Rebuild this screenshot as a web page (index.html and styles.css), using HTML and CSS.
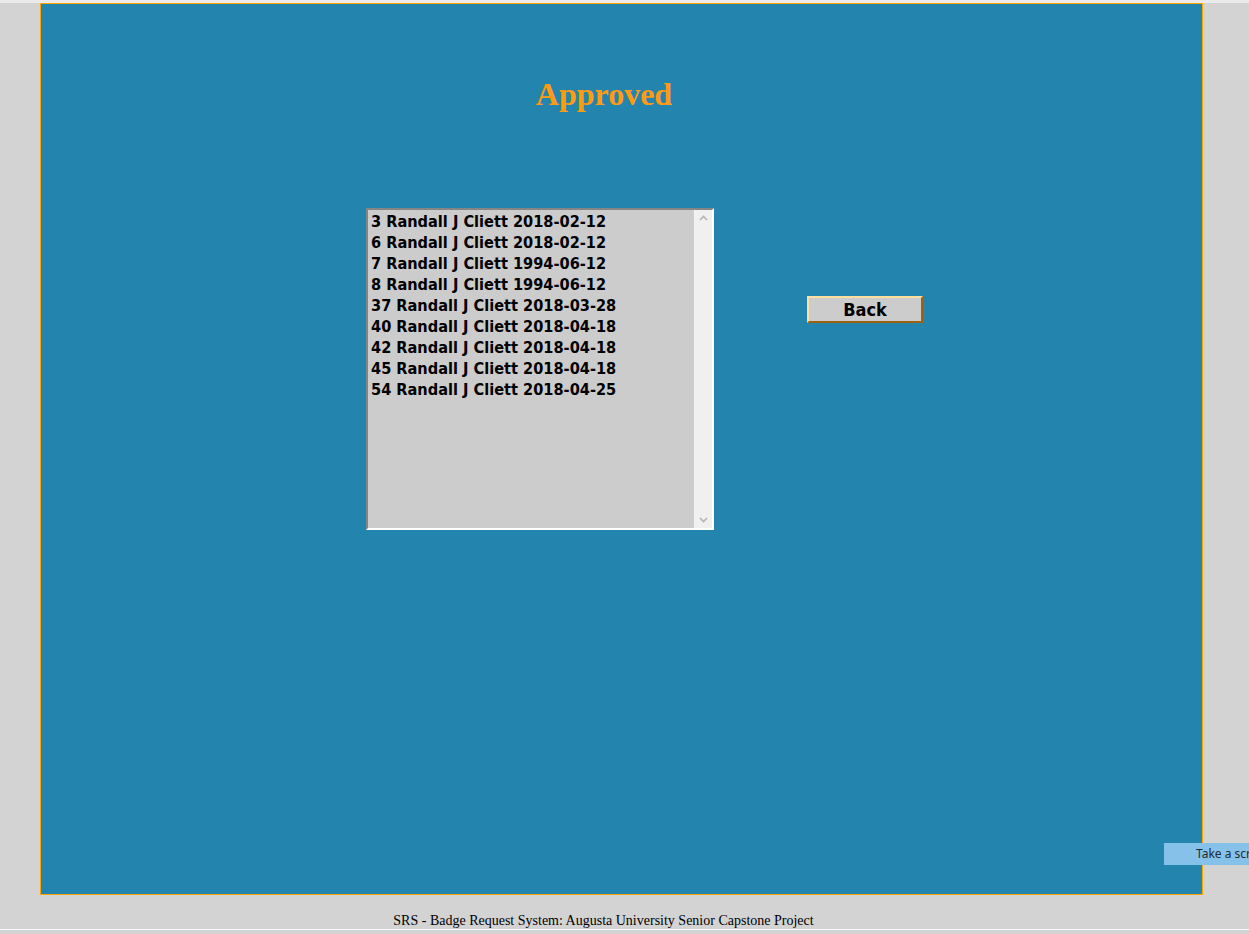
FILE: index.html
```html
<!DOCTYPE html>
<html>
<head>
<meta charset="utf-8">
<title>Approved</title>
<link rel="stylesheet" href="styles.css">
</head>
<body>
<div class="topline"></div>
<div class="panel">
  <h1 class="title">Approved</h1>
  <div class="row">
    <div class="listbox">
      <ul class="items">
        <li>3 Randall J Cliett 2018-02-12</li>
        <li>6 Randall J Cliett 2018-02-12</li>
        <li>7 Randall J Cliett 1994-06-12</li>
        <li>8 Randall J Cliett 1994-06-12</li>
        <li>37 Randall J Cliett 2018-03-28</li>
        <li>40 Randall J Cliett 2018-04-18</li>
        <li>42 Randall J Cliett 2018-04-18</li>
        <li>45 Randall J Cliett 2018-04-18</li>
        <li>54 Randall J Cliett 2018-04-25</li>
      </ul>
      <div class="scrollbar">
        <svg class="arrow" width="9" height="6" viewBox="0 0 9 6"><path d="M1 5 L4.5 1.5 L8 5" fill="none" stroke="#b4b4b4" stroke-width="1.6"/></svg>
        <svg class="arrow" width="9" height="6" viewBox="0 0 9 6"><path d="M1 1 L4.5 4.5 L8 1" fill="none" stroke="#b4b4b4" stroke-width="1.6"/></svg>
      </div>
    </div>
    <button class="back">Back</button>
  </div>
</div>
<div class="footer">SRS - Badge Request System: Augusta University Senior Capstone Project</div>
<div class="bottomline"></div>
<div class="tooltip">Take a screenshot</div>
</body>
</html>
```

FILE: styles.css
```css
html, body {
  margin: 0;
  padding: 0;
}
body {
  background: #d3d3d3;
  overflow: hidden;
  height: 934px;
  position: relative;
  font-family: "Liberation Serif", serif;
}
.topline {
  height: 3px;
  background: #ebebeb;
}
.panel {
  margin-left: 40px;
  width: 1161px;
  height: 890px;
  background: #2385ad;
  border: 1px solid #ffa500;
}
.title {
  margin: 72px 0 0 0;
  width: 1126px;
  text-align: center;
  font-family: "Liberation Serif", serif;
  font-weight: bold;
  font-size: 32px;
  line-height: 37px;
  color: #ff9a12;
}
.row {
  display: flex;
  align-items: flex-start;
  margin-top: 95px;
  padding-left: 325px;
}
.listbox {
  display: flex;
  width: 344px;
  height: 318px;
  background: #cccccc;
  border-style: solid;
  border-width: 2px;
  border-color: #858585 #ffffff #ffffff #858585;
}
.items {
  list-style: none;
  margin: 0;
  padding: 1px 0 0 3px;
  flex: 1;
  font-family: "DejaVu Sans Condensed", "DejaVu Sans", sans-serif;
  font-stretch: condensed;
  font-weight: bold;
  font-size: 16.2px;
  line-height: 21px;
  color: #000;
  border-right: 1px solid #f4f4f4;
}
.scrollbar {
  width: 17px;
  background: #f0f0f0;
  display: flex;
  flex-direction: column;
  justify-content: space-between;
  align-items: center;
  padding: 5px 0 5px 0;
  box-sizing: border-box;
}
.arrow {
  display: block;
}
.back {
  margin: 88px 0 0 93px;
  width: 116px;
  height: 27px;
  padding: 0;
  background: #cccccc;
  border-style: solid;
  border-width: 2px;
  border-color: #ffdfa0 #a0600e #a0600e #ffdfa0;
  font-family: "DejaVu Sans Condensed", "DejaVu Sans", sans-serif;
  font-stretch: condensed;
  font-weight: bold;
  font-size: 18px;
  line-height: 21px;
  color: #000;
}
.footer {
  width: 1207px;
  margin-top: 18px;
  text-align: center;
  font-family: "Liberation Serif", serif;
  font-size: 14px;
  line-height: 16px;
  color: #000;
}
.bottomline {
  height: 1px;
  background: #ffffff;
}
.tooltip {
  position: absolute;
  left: 1164px;
  top: 843px;
  width: 150px;
  height: 22px;
  box-sizing: border-box;
  padding-left: 32px;
  background: #85c1e9;
  color: #1e2a33;
  font-family: "Noto Sans", sans-serif;
  font-size: 12px;
  line-height: 22px;
  white-space: nowrap;
}
```
